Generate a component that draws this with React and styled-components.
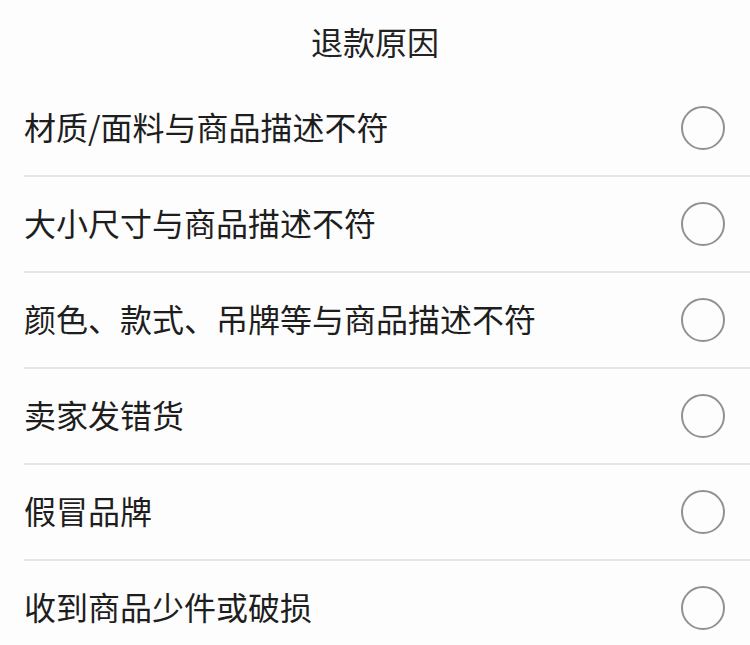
import styled, { createGlobalStyle } from 'styled-components';

const GlobalStyle = createGlobalStyle`
  html, body {
    margin: 0;
    padding: 0;
    background: #fdfdfd;
  }
  body {
    font-family: "Noto Sans CJK SC", "Noto Sans", sans-serif;
    color: #1e1e1e;
  }
`;

const Sheet = styled.div`
  width: 750px;
  height: 645px;
  overflow: hidden;
  background: #fdfdfd;
`;

const Title = styled.h2`
  margin: 0;
  height: 81px;
  display: flex;
  align-items: center;
  justify-content: center;
  box-sizing: border-box;
  font-size: 32px;
  font-weight: 400;
  color: #222;
`;

const List = styled.ul`
  list-style: none;
  margin: 0;
  padding: 0 0 0 24px;
`;

const Row = styled.li`
  height: 94px;
  display: flex;
  align-items: center;
  justify-content: space-between;
  padding-right: 25px;
  border-bottom: ${(p) => (p.$last ? 'none' : '2px solid #e6e6e6')};
  cursor: pointer;
`;

const Label = styled.span`
  font-size: 32px;
  line-height: 1;
  margin-bottom: 5px;
  color: #1e1e1e;
`;

const Radio = styled.span`
  width: 40px;
  height: 40px;
  border-radius: 50%;
  border: 2px solid #919191;
  flex-shrink: 0;
  margin-bottom: 1px;
`;

const reasons = [
  '材质/面料与商品描述不符',
  '大小尺寸与商品描述不符',
  '颜色、款式、吊牌等与商品描述不符',
  '卖家发错货',
  '假冒品牌',
  '收到商品少件或破损',
];

export default function App() {
  return (
    <Sheet>
      <GlobalStyle />
      <Title>退款原因</Title>
      <List>
        {reasons.map((r, i) => (
          <Row key={r} $last={i === reasons.length - 1}>
            <Label>{r}</Label>
            <Radio />
          </Row>
        ))}
      </List>
    </Sheet>
  );
}
